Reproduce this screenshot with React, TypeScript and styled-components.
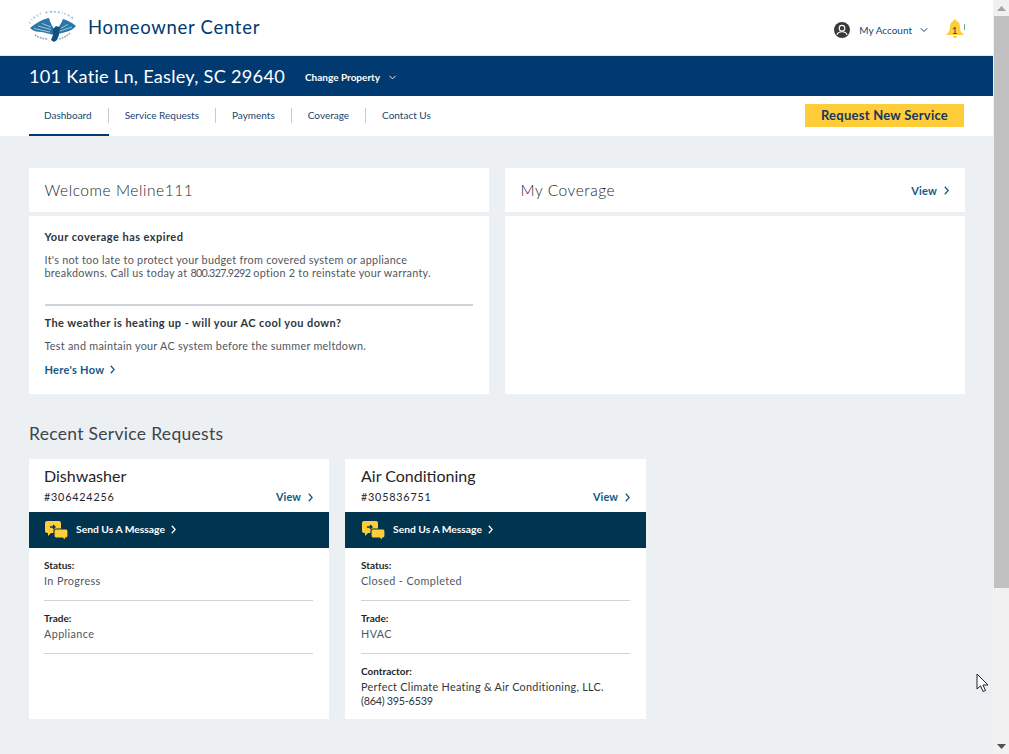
import React from 'react';
import styled, { createGlobalStyle } from 'styled-components';
import { ChevronDown } from 'lucide-react';

const GlobalStyle = createGlobalStyle`
  html, body {
    margin: 0;
    padding: 0;
    height: 100%;
    overflow: hidden;
  }
  body {
    font-family: Lato, "Open Sans", sans-serif;
    color: #3a4047;
  }
`;

const Page = styled.div`
  display: flex;
  width: 1009px;
  height: 754px;
  position: relative;
  overflow: hidden;
`;

const Main = styled.div`
  width: 993px;
  height: 754px;
  background: #edf0f3;
  overflow: hidden;
`;

const Scrollbar = styled.div`
  width: 16px;
  background: #f1f1f1;
  display: flex;
  flex-direction: column;
  align-items: center;
`;

const ScrollBtn = styled.div`
  height: 16px;
  width: 16px;
  display: flex;
  align-items: center;
  justify-content: center;
`;

const ScrollThumb = styled.div`
  width: 15px;
  height: 572px;
  background: #c1c1c1;
`;

const ScrollSpacer = styled.div`
  flex: 1;
`;

const Header = styled.header`
  height: 55px;
  background: #fff;
  border-bottom: 1px solid #e4e6e8;
  display: flex;
  align-items: center;
  padding: 0 29px;
`;

const LogoMark = styled.svg`
  margin-top: -3px;
`;

const Brand = styled.div`
  font-size: 18.5px;
  letter-spacing: 0.72px;
  color: #003a70;
  margin-left: 11px;
  margin-top: -2px;
`;

const HeaderRight = styled.div`
  margin-left: auto;
  display: flex;
  align-items: center;
  margin-top: 4px;
`;

const AccountLabel = styled.span`
  font-size: 10px;
  color: #17466f;
  margin-left: 9px;
  margin-right: 6px;
`;

const BellWrap = styled.div`
  margin-left: 16px;
  width: 18px;
  height: 20px;
  position: relative;
  top: -1px;
`;

const BellCount = styled.span`
  position: absolute;
  left: 6px;
  top: 6px;
  font-size: 9px;
  color: #12395f;
`;

const BellDot = styled.span`
  position: absolute;
  left: 18px;
  top: 5px;
  width: 1px;
  height: 6px;
  background: #6fb07a;
`;

const AddressBar = styled.div`
  height: 40px;
  background: #003a70;
  color: #fff;
  display: flex;
  align-items: center;
  padding: 0 29px;
`;

const Address = styled.div`
  font-size: 18.2px;
  letter-spacing: 0.25px;
`;

const ChangeProperty = styled.div`
  font-size: 10px;
  font-weight: 700;
  margin-left: 20px;
  margin-top: 2px;
  display: flex;
  align-items: center;
  gap: 7px;
`;

const NavBar = styled.nav`
  height: 40px;
  background: #fff;
  display: flex;
  align-items: center;
  padding: 0 29px;
`;

const NavItem = styled.div<{ $active?: boolean; $last?: boolean }>`
  height: 40px;
  box-sizing: border-box;
  display: flex;
  align-items: center;
  padding: 0 17px 2px 16px;
  font-size: 10px;
  color: #17466f;
  position: relative;
  box-shadow: ${(p) => (p.$active ? 'inset 0 -2px 0 #003a70' : 'none')};
  &:first-child {
    padding-left: 15px;
  }
  &::after {
    content: ${(p) => (p.$last ? 'none' : '""')};
    position: absolute;
    right: 0;
    top: 12px;
    height: 15px;
    width: 1px;
    background: #c9cdd1;
  }
`;

const RequestButton = styled.button`
  margin-left: auto;
  margin-top: -1px;
  width: 159px;
  height: 23px;
  border: 0;
  padding: 0 0 1px;
  background: #ffcd39;
  color: #17365f;
  font-family: inherit;
  font-size: 13px;
  font-weight: 700;
  letter-spacing: 0.25px;
`;

const Content = styled.main`
  padding: 32px 28px 0 29px;
`;

const TopGrid = styled.div`
  display: grid;
  grid-template-columns: 460px 460px;
  gap: 16px;
`;

const Column = styled.div`
  display: flex;
  flex-direction: column;
  gap: 4px;
`;

const PanelHead = styled.div`
  height: 44px;
  background: #fff;
  display: flex;
  align-items: center;
  justify-content: space-between;
  padding: 0 16px 0 15.5px;
`;

const PanelTitle = styled.h2`
  margin: 0;
  font-size: 15.5px;
  font-weight: 300;
  letter-spacing: 0.55px;
  color: #1c2630;
`;

const PanelBody = styled.div`
  height: 178px;
  background: #fff;
  box-sizing: border-box;
  padding: 14px 16px 0 15.5px;
`;

const Strong = styled.div`
  font-size: 11px;
  font-weight: 700;
  letter-spacing: 0.45px;
  line-height: 14px;
  color: #2f353b;
`;

const Para = styled.p`
  margin: 9px 0 0;
  font-size: 10.8px;
  line-height: 13px;
  letter-spacing: 0.28px;
  color: #50575e;
`;

const Hotline = styled.span`
  letter-spacing: -0.65px;
`;

const Rule = styled.hr`
  border: 0;
  height: 2px;
  background: #d0d3d7;
  margin: 25px 0 10px;
`;

const TextLink = styled.a`
  display: inline-flex;
  align-items: center;
  gap: 7px;
  font-size: 11px;
  font-weight: 700;
  letter-spacing: 0.2px;
  color: #0f5a85;
`;

const HowLink = styled(TextLink)`
  margin-top: 11px;
  letter-spacing: 0.3px;
  gap: 6px;
`;

const SectionTitle = styled.h3`
  margin: 30px 0 15px;
  font-size: 17.5px;
  line-height: 20px;
  font-weight: 400;
  letter-spacing: 0.3px;
  color: #3d454d;
`;

const Cards = styled.div`
  display: flex;
  gap: 16px;
`;

const Card = styled.section`
  --inset: 15px;
  width: 300px;
  height: 260px;
  background: #fff;
  & + & {
    --inset: 16px;
    width: 301px;
  }
`;

const CardHead = styled.div`
  height: 53px;
  box-sizing: border-box;
  padding: 7px 16px 0 var(--inset);
`;

const CardTitle = styled.div`
  font-size: 16px;
  line-height: 20px;
  color: #1f2428;
`;

const CardMeta = styled.div`
  display: flex;
  justify-content: space-between;
  align-items: center;
  margin-top: 3px;
  font-size: 10.8px;
  line-height: 16px;
  letter-spacing: 0.8px;
  color: #1f2428;
`;

const CardLink = styled(TextLink)`
  font-size: 10.8px;
  letter-spacing: 0.1px;
`;

const MessageBar = styled.div`
  height: 36px;
  box-sizing: border-box;
  background: #00344f;
  color: #fff;
  display: flex;
  align-items: center;
  padding: 0 0 2px calc(var(--inset) + 1px);
  font-size: 10.3px;
  font-weight: 700;
`;

const ChatMark = styled.svg`
  margin-top: 3px;
`;

const MessageText = styled.span`
  margin-left: 8px;
  margin-right: 6px;
`;

const Fields = styled.div`
  padding: 11px 16px 0 var(--inset);
`;

const Field = styled.div<{ $plain?: boolean }>`
  padding-bottom: ${(p) => (p.$plain ? '0' : '13px')};
  margin-bottom: 11px;
  border-bottom: ${(p) => (p.$plain ? '0' : '1px solid #d0d3d7')};
`;

const FieldLabel = styled.div`
  font-size: 10px;
  font-weight: 700;
  line-height: 13px;
  color: #1f2428;
`;

const FieldValue = styled.div`
  margin-top: 2px;
  font-size: 10.8px;
  line-height: 13px;
  letter-spacing: 0.4px;
  color: #50575e;
`;

const ContractorInfo = styled(FieldValue)`
  line-height: 14px;
  letter-spacing: 0.3px;
  color: #2f353b;
`;

const ContractorPhone = styled.span`
  letter-spacing: -0.25px;
`;

const Pointer = styled.svg`
  position: absolute;
  left: 976px;
  top: 673px;
`;

const Eagle = () => (
  <LogoMark width="48" height="34" viewBox="0 0 48 34">
    <defs>
      <path id="seal-arc" d="M1 16 C 5 7 14 4 24 4 C 34 4 43 7 47 16" />
    </defs>
    <text fontSize="3" fontWeight="700" letterSpacing="1.75" fill="#6e93b3">
      <textPath href="#seal-arc" startOffset="1">FIRST AMERICAN</textPath>
    </text>
    <path
      d="M1 19 C 7 14 14 10 20 9 C 21 13 23 17 25 20 L25 26 C 21 25 17 24 13 23 C 8 23 4 22 1 19 Z"
      fill="#2a76a8"
    />
    <path
      d="M47 17 C 42 13 38 11 34 10 C 33 13 31 16 29 19 L29 25 C 33 24 37 23 40 22 C 43 21 45 19 47 17 Z"
      fill="#2a76a8"
    />
    <path d="M24 20 L27 17 L30 18 L33 20 L30 21 L30 26 L28 31 L25 33 L22 31 L24 26 Z" fill="#14507f" />
    <path
      d="M5 19.5 L21 23 M9 17 L22 20.5 M13 14.5 L22 18 M43 18 L31 22 M39 15.5 L31.5 19.5"
      stroke="#dbe7f0"
      strokeWidth="0.7"
    />
    <path
      d="M6 26 C 9 28 14 30 19 30 M41 24 C 38 27 34 29 30 30"
      fill="none"
      stroke="#8aacc6"
      strokeWidth="1.6"
      strokeDasharray="1.8 0.9"
    />
  </LogoMark>
);

const UserIcon = () => (
  <svg width="16" height="16" viewBox="0 0 16 16">
    <circle cx="8" cy="8" r="8" fill="#3a3a3c" />
    <circle cx="8" cy="6.2" r="2.8" fill="none" stroke="#fff" strokeWidth="1.1" />
    <path d="M3 13 C 3.5 10.5 5.5 9.8 8 9.8 C 10.5 9.8 12.5 10.5 13 13" fill="none" stroke="#fff" strokeWidth="1.1" />
  </svg>
);

const Bell = () => (
  <svg width="18" height="20" viewBox="0 0 18 20">
    <path
      d="M9 0.5 C 10 0.5 10.5 1.2 10.5 2 C 13 2.8 14 5 14 8 C 14 11.5 15 13.5 17.5 15 L17.5 16 L0.5 16 L0.5 15 C 3 13.5 4 11.5 4 8 C 4 5 5 2.8 7.5 2 C 7.5 1.2 8 0.5 9 0.5 Z M7 17 L11 17 C 11 18.5 10 19 9 19 C 8 19 7 18.5 7 17 Z"
      fill="#ffcd39"
    />
  </svg>
);

const Chat = () => (
  <ChatMark width="23" height="20" viewBox="0 0 23 20">
    <path d="M2 0 H14 A2 2 0 0 1 16 2 V10 A2 2 0 0 1 14 12 H6 L3 15 V12 H2 A2 2 0 0 1 0 10 V2 A2 2 0 0 1 2 0 Z" fill="#ffcd39" />
    <path d="M5 6 H10 M8 4 L10 6 L8 8" fill="none" stroke="#00344f" strokeWidth="1.3" />
    <path d="M11 8 H21 A2 2 0 0 1 23 10 V15 A2 2 0 0 1 21 17 H20.5 V20 L17.5 17 H11 A2 2 0 0 1 9 15 V10 A2 2 0 0 1 11 8 Z" fill="#ffcd39" stroke="#00344f" strokeWidth="1.2" />
  </ChatMark>
);

const Chevron = () => (
  <svg width="5" height="9" viewBox="0 0 5 9">
    <path d="M0.8 0.8 L4.2 4.5 L0.8 8.2" fill="none" stroke="currentColor" strokeWidth="1.3" />
  </svg>
);

type ServiceCardProps = {
  title: string;
  number: string;
  status: string;
  trade: string;
  contractor?: React.ReactNode;
};

function ServiceCard({ title, number, status, trade, contractor }: ServiceCardProps) {
  return (
    <Card>
      <CardHead>
        <CardTitle>{title}</CardTitle>
        <CardMeta>
          <span>{number}</span>
          <CardLink>
            View <Chevron />
          </CardLink>
        </CardMeta>
      </CardHead>
      <MessageBar>
        <Chat />
        <MessageText>Send Us A Message</MessageText>
        <Chevron />
      </MessageBar>
      <Fields>
        <Field>
          <FieldLabel>Status:</FieldLabel>
          <FieldValue>{status}</FieldValue>
        </Field>
        <Field>
          <FieldLabel>Trade:</FieldLabel>
          <FieldValue>{trade}</FieldValue>
        </Field>
        {contractor && (
          <Field $plain>
            <FieldLabel>Contractor:</FieldLabel>
            <ContractorInfo>{contractor}</ContractorInfo>
          </Field>
        )}
      </Fields>
    </Card>
  );
}

export default function App() {
  return (
    <Page>
      <GlobalStyle />
      <Main>
        <Header>
          <Eagle />
          <Brand>Homeowner Center</Brand>
          <HeaderRight>
            <UserIcon />
            <AccountLabel>My Account</AccountLabel>
            <ChevronDown size={12} color="#17466f" />
            <BellWrap>
              <Bell />
              <BellCount>1</BellCount>
              <BellDot />
            </BellWrap>
          </HeaderRight>
        </Header>
        <AddressBar>
          <Address>101 Katie Ln, Easley, SC 29640</Address>
          <ChangeProperty>
            Change Property <ChevronDown size={11} />
          </ChangeProperty>
        </AddressBar>
        <NavBar>
          <NavItem $active>Dashboard</NavItem>
          <NavItem>Service Requests</NavItem>
          <NavItem>Payments</NavItem>
          <NavItem>Coverage</NavItem>
          <NavItem $last>Contact Us</NavItem>
          <RequestButton>Request New Service</RequestButton>
        </NavBar>
        <Content>
          <TopGrid>
            <Column>
              <PanelHead>
                <PanelTitle>Welcome Meline111</PanelTitle>
              </PanelHead>
              <PanelBody>
                <Strong>Your coverage has expired</Strong>
                <Para>
                  It's not too late to protect your budget from covered system or appliance
                  <br />
                  breakdowns. Call us today at <Hotline>800.327.9292</Hotline> option 2 to reinstate your warranty.
                </Para>
                <Rule />
                <Strong>The weather is heating up - will your AC cool you down?</Strong>
                <Para>Test and maintain your AC system before the summer meltdown.</Para>
                <HowLink>
                  Here's How <Chevron />
                </HowLink>
              </PanelBody>
            </Column>
            <Column>
              <PanelHead>
                <PanelTitle>My Coverage</PanelTitle>
                <TextLink>
                  View <Chevron />
                </TextLink>
              </PanelHead>
              <PanelBody />
            </Column>
          </TopGrid>
          <SectionTitle>Recent Service Requests</SectionTitle>
          <Cards>
            <ServiceCard title="Dishwasher" number="#306424256" status="In Progress" trade="Appliance" />
            <ServiceCard
              title="Air Conditioning"
              number="#305836751"
              status="Closed - Completed"
              trade="HVAC"
              contractor={
                <>
                  Perfect Climate Heating &amp; Air Conditioning, LLC.
                  <br />
                  <ContractorPhone>(864) 395-6539</ContractorPhone>
                </>
              }
            />
          </Cards>
        </Content>
      </Main>
      <Scrollbar>
        <ScrollBtn>
          <svg width="9" height="5" viewBox="0 0 9 5"><path d="M4.5 0 L9 5 H0 Z" fill="#a3a3a3" /></svg>
        </ScrollBtn>
        <ScrollThumb />
        <ScrollSpacer />
        <ScrollBtn>
          <svg width="9" height="5" viewBox="0 0 9 5"><path d="M0 0 H9 L4.5 5 Z" fill="#505050" /></svg>
        </ScrollBtn>
      </Scrollbar>
      <Pointer width="13" height="20" viewBox="0 0 13 20">
        <path d="M1 1 V16 L4.5 12.8 L7 18.5 L9.5 17.5 L7 12 H12 Z" fill="#fff" stroke="#1c2233" strokeWidth="1" />
      </Pointer>
    </Page>
  );
}
